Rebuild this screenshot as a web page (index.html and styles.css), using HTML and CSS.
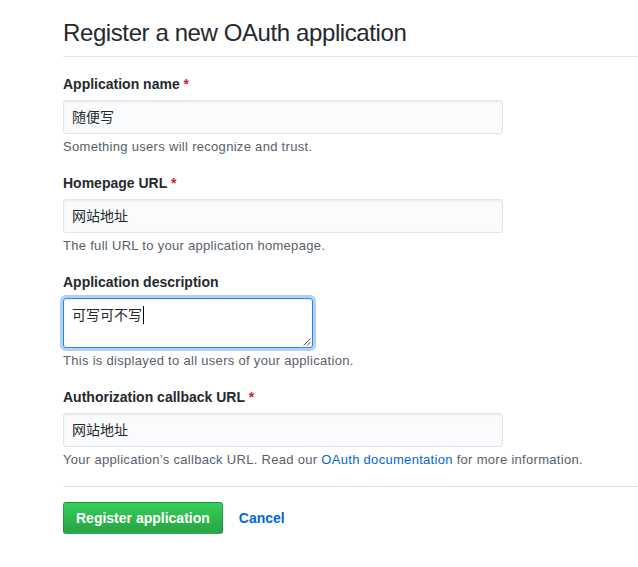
FILE: index.html
```html
<!DOCTYPE html>
<html lang="en">
<head>
<meta charset="utf-8">
<title>Register a new OAuth application</title>
<link rel="stylesheet" href="styles.css">
</head>
<body>
<div class="page">
  <div class="subhead">
    <h2 class="subhead-heading">Register a new OAuth application</h2>
  </div>
  <form class="form">
    <dl class="form-group">
      <dt><label>Application name <span class="req">*</span></label></dt>
      <dd><div class="form-control input">随便写</div></dd>
      <dd class="note">Something users will recognize and trust.</dd>
    </dl>
    <dl class="form-group">
      <dt><label>Homepage URL <span class="req">*</span></label></dt>
      <dd><div class="form-control input">网站地址</div></dd>
      <dd class="note">The full URL to your application homepage.</dd>
    </dl>
    <dl class="form-group">
      <dt><label>Application description</label></dt>
      <dd>
        <div class="form-control textarea focus">可写可不写<span class="caret"></span>
          <svg class="grip" width="9" height="9" viewBox="0 0 9 9"><path d="M8.5 1.5 L1.5 8.5 M8.5 5 L5 8.5" stroke="#555" stroke-width="1" fill="none"/></svg>
        </div>
      </dd>
      <dd class="note">This is displayed to all users of your application.</dd>
    </dl>
    <dl class="form-group">
      <dt><label>Authorization callback URL <span class="req">*</span></label></dt>
      <dd><div class="form-control input">网站地址</div></dd>
      <dd class="note">Your application’s callback URL. Read our <a href="#">OAuth documentation</a> for more information.</dd>
    </dl>
    <hr class="divider">
    <div class="actions">
      <button type="button" class="btn-primary">Register application</button>
      <a href="#" class="btn-link">Cancel</a>
    </div>
  </form>
</div>
</body>
</html>
```

FILE: styles.css
```css
* { box-sizing: border-box; }
html, body { margin: 0; padding: 0; background: #fff; }
body {
  font-family: "Liberation Sans", Arial, "Noto Sans CJK SC", sans-serif;
  font-size: 14px;
  line-height: 1.5;
  color: #24292e;
  overflow: hidden;
}
.page { padding-left: 63px; }
.subhead {
  padding-top: 18px;
  padding-bottom: 8px;
  border-bottom: 1px solid #e1e4e8;
}
.subhead-heading {
  margin: 0;
  font-size: 24px;
  font-weight: 400;
  line-height: 30px;
  letter-spacing: -0.4px;
}
.form {
  display: flex;
  flex-direction: column;
  gap: 15px;
  padding-top: 17px;
}
.form-group { margin: 0; }
.form-group dt { margin: 0 0 6px 0; }
.form-group dd { margin: 0; }
.form-group label {
  font-weight: 700;
  font-size: 14px;
  line-height: 20px;
  display: block;
}
.req { color: #cb2431; }
.form-control {
  font-family: "Liberation Sans", Arial, "Noto Sans CJK SC", sans-serif;
  font-size: 14px;
  line-height: 20px;
  color: #24292e;
  padding: 6px 8px;
  background: #fafbfc;
  border: 1px solid #e1e4e8;
  border-radius: 3px;
  box-shadow: inset 0 1px 2px rgba(27,31,35,.075);
}
.input { width: 440px; height: 34px; }
.textarea {
  position: relative;
  width: 250px;
  height: 50px;
  background: #fff;
}
.textarea.focus {
  border-color: #2188ff;
  box-shadow: inset 0 1px 2px rgba(27,31,35,.075), 0 0 0 3px rgba(3,102,214,.3);
}
.caret {
  display: inline-block;
  width: 1px;
  height: 18px;
  background: #000;
  vertical-align: -4px;
  margin-left: 1px;
}
.grip { position: absolute; right: 1px; bottom: 1px; }
.form-group .note {
  margin: 4px 0 2px 0;
  font-size: 13px;
  line-height: 18px;
  letter-spacing: 0.3px;
  color: #586069;
}
.note a { color: #0366d6; text-decoration: none; }
.divider {
  margin: 0;
  border: 0;
  height: 0;
  border-top: 1px solid #e1e4e8;
}
.actions { display: flex; align-items: center; gap: 16px; }
.btn-primary {
  font-family: "Liberation Sans", Arial, sans-serif;
  font-size: 14px;
  font-weight: 700;
  line-height: 20px;
  color: #fff;
  padding: 5px 12px;
  border: 1px solid rgba(27,31,35,.2);
  border-radius: 3px;
  background: linear-gradient(-180deg, #34d058 0%, #28a745 90%);
  cursor: pointer;
}
.btn-link {
  font-size: 14px;
  font-weight: 700;
  color: #0366d6;
  text-decoration: none;
}
```
